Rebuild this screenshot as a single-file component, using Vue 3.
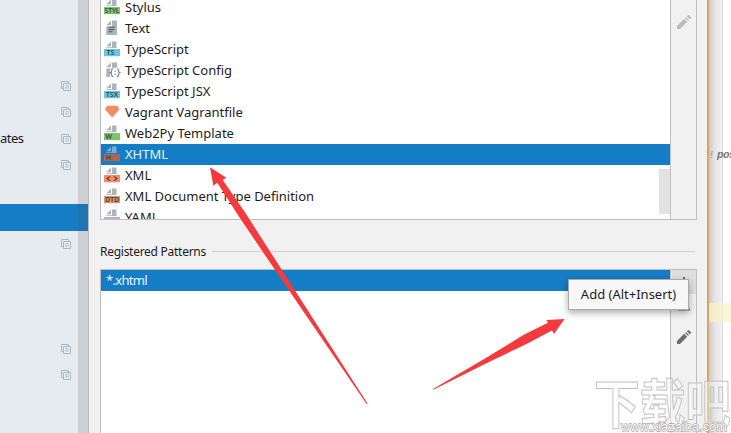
<script setup>
const sideRows = [
  { copy: true },
  { copy: true },
  { copy: true, label: 'ates' },
  { copy: true },
  {},
  { selected: true },
  { copy: true },
  {},
  {},
  {},
  { copy: true },
  { copy: true },
]

const fileTypes = [
  { name: 'Stylus', kind: 'tag', tag: 'STYL', tone: 'green' },
  { name: 'Text', kind: 'text' },
  { name: 'TypeScript', kind: 'tag', tag: 'TS', tone: 'cyan' },
  { name: 'TypeScript Config', kind: 'config' },
  { name: 'TypeScript JSX', kind: 'tag', tag: 'TSX', tone: 'cyan' },
  { name: 'Vagrant Vagrantfile', kind: 'vagrant' },
  { name: 'Web2Py Template', kind: 'tag', tag: 'W', tone: 'green' },
  { name: 'XHTML', kind: 'tag', tag: 'H', tone: 'brown', selected: true },
  { name: 'XML', kind: 'tag', tag: '<>', tone: 'orange' },
  { name: 'XML Document Type Definition', kind: 'tag', tag: 'DTD', tone: 'orange' },
  { name: 'YAML', kind: 'tag', tag: '', tone: 'violet' },
]
</script>

<template>
  <div class="screen">
    <aside class="sidebar">
      <div class="side-rows">
        <div v-for="(row, i) in sideRows" :key="i" class="side-row" :class="{ selected: row.selected }">
          <span class="side-label">{{ row.label }}</span>
          <svg v-if="row.copy" class="copy" viewBox="0 0 10 10">
            <path d="M2.500 7.500H.5V.5h7v2" />
            <path d="M2.500 2.500h7v7h-7zM4.300 4.800h3.500M4.300 6.900h3.500" />
          </svg>
        </div>
      </div>
      <div class="side-shade"></div>
    </aside>

    <main class="dialog">
      <section class="box types">
        <div class="list">
          <div v-for="item in fileTypes" :key="item.name" class="row" :class="{ selected: item.selected }">
            <svg class="icon" viewBox="0 0 16 16">
              <template v-if="item.kind === 'tag'">
                <path class="sheet" d="M2.300 5.300 7 .6v4.700zM8 .5h4.500V7H2.300V6.200H8z" />
                <rect class="tag" :class="item.tone" x="0" y="8" width="16" height="7.200" />
                <path v-if="item.tag === '<>'" class="angle" d="M6 9.500 3 11.600 6 13.700M10 9.500l3 2.100-3 2.100" />
                <text v-else class="tag-text" :class="{ wide: item.tag.length > 3 }" :x="item.tag.length > 2 ? 8 : item.tag.length > 1 ? 6.5 : 4.5" y="14.200">{{ item.tag }}</text>
              </template>
              <template v-else-if="item.kind === 'text'">
                <path class="sheet" d="M2.300 5.300 7 .6v4.700zM8 .5h5V15H2.300V6.400H8z" />
                <path class="lines" d="M4.500 7.300h6M4.500 9.500h6M4.500 11.700h4" />
              </template>
              <template v-else-if="item.kind === 'config'">
                <path class="sheet" d="M2.300 5.300 7 .6v4.700zM8 .5h5v5.200H8.300L6 8v7H2.300V6.400H8z" />
                <path class="brace" d="M9.200 6.700c-1.300 0-1.500.5-1.500 1.600 0 1.300-.2 2-1.200 2.300 1 .3 1.200 1 1.200 2.300 0 1.200.3 1.700 1.500 1.700M13 6.700c1.300 0 1.500.5 1.500 1.600 0 1.300.2 2 1.100 2.300-.9.3-1.100 1-1.100 2.300 0 1.200-.3 1.700-1.500 1.700" />
                <path class="brace" d="M11.100 8.800v1.200M11.100 11.500v1.400" />
              </template>
              <path v-else class="vagrant" d="M3 1.800h10.500l1.800 3.800-7 8-7.300-8z" />
            </svg>
            <span>{{ item.name }}</span>
          </div>
          <div class="thumb"></div>
        </div>
        <div class="tools">
          <svg class="pencil muted" viewBox="0 0 14 14">
            <path d="M0 11v3h3l7.200-7.200-3-3zM8.100 2.900l3 3 .8-.8-3-3zM9.800 1.300l3 3 .9-.9a1.100 1.100 0 0 0 0-1.500L12.200.4a1.100 1.100 0 0 0-1.500 0z" />
          </svg>
        </div>
      </section>

      <div class="heading">
        <span>Registered Patterns</span>
        <i></i>
      </div>

      <section class="box patterns">
        <div class="list">
          <div class="row selected pattern">*.xhtml</div>
        </div>
        <div class="tools stacked">
          <div class="button hover">
            <svg viewBox="0 0 12 12"><path d="M6 1v11M1 6.500h10" /></svg>
          </div>
          <div class="button">
            <svg viewBox="0 0 12 12"><path d="M0 9.500h12" /></svg>
          </div>
          <svg class="pencil" viewBox="0 0 14 14">
            <path d="M0 11v3h3l7.200-7.200-3-3zM8.100 2.900l3 3 .8-.8-3-3zM9.800 1.300l3 3 .9-.9a1.100 1.100 0 0 0 0-1.500L12.200.4a1.100 1.100 0 0 0-1.500 0z" />
          </svg>
        </div>
      </section>
    </main>

    <aside class="editor">
      <div class="gutter"></div>
      <div class="code">
        <div class="caret-line"></div>
      </div>
      <span class="snippet"><b>!</b>pos</span>
    </aside>

    <div class="tooltip">Add (Alt+Insert)</div>

    <svg class="overlay" viewBox="0 0 731 433">
      <g class="arrows">
        <path d="M210 167.300 226.300 177.700 222.700 180 245.100 212.600 288.300 279.900 367.500 403.500 366.500 404 283.800 282.800 238.900 216.600 217.300 182.700 213.300 185.700z" />
        <path d="M564.500 319 554 334 552 330.500 526.500 344 490 361.500 433.300 389.800 433 389 486.700 357.500 523.300 335 548 322.700 546.300 320z" />
      </g>
      <text class="mark" x="594" y="424" textLength="137" lengthAdjust="spacingAndGlyphs">下载吧</text>
      <text class="mark-url" x="621" y="431" textLength="106" lengthAdjust="spacingAndGlyphs">www.xiazaiba.com</text>
    </svg>
  </div>
</template>

<style>
body {
  margin: 0;
  overflow: hidden;
}
</style>

<style scoped>
.screen {
  position: relative;
  display: flex;
  width: 731px;
  height: 433px;
  overflow: hidden;
  background: #fff;
  color: #1c1c1c;
  font: 13px/21px "Noto Sans", sans-serif;
}
.sidebar {
  position: relative;
  flex: 0 0 88px;
  background: #e6ebf0;
}
.side-rows {
  padding-top: 73px;
}
.side-row {
  display: flex;
  align-items: center;
  justify-content: space-between;
  height: 26.25px;
  padding-right: 17px;
}
.side-row.selected {
  background: #147dc6;
}
.side-label {
  letter-spacing: -0.5px;
}
.copy {
  width: 10px;
  height: 10px;
  fill: none;
  stroke: #aeb7bf;
}
.side-shade {
  position: absolute;
  top: 0;
  right: 0;
  width: 10px;
  height: 100%;
  background: rgba(75, 75, 80, 0.17);
}
.dialog {
  flex: 0 0 619px;
  box-sizing: border-box;
  display: flex;
  flex-direction: column;
  padding: 0 11px;
  background: #f1f1f1;
  border-left: 1px solid #b9bbbe;
}
.box {
  display: flex;
  box-sizing: border-box;
  width: 597px;
  border: 1px solid #bebebe;
}
.types {
  height: 220px;
  border-top: 0;
}
.list {
  position: relative;
  flex: 1;
  overflow: hidden;
  background: #fff;
}
.types .row:first-child {
  margin-top: -3.500px;
}
.row {
  display: flex;
  align-items: center;
  height: 21px;
  padding-left: 3px;
  gap: 5px;
  white-space: nowrap;
}
.row.selected {
  background: #147dc6;
  color: #e8f4fc;
}
.icon {
  width: 16px;
  height: 16px;
  overflow: visible;
}
.sheet {
  fill: #abb4bb;
}
.selected .sheet {
  fill: #7ea9c8;
}
.green { fill: #80c46c; }
.cyan { fill: #6cc4e2; }
.brown { fill: #aa6753; }
.orange { fill: #f28c65; }
.violet { fill: #b8aed5; }
.tag-text {
  fill: #2b4a4c;
  font: 600 7px "Noto Sans", sans-serif;
  text-anchor: middle;
}
.tag-text.wide {
  font-size: 6.600px;
}
.angle,
.lines,
.brace {
  fill: none;
  stroke: #4b5359;
  stroke-width: 1.1;
}
.angle {
  stroke: #6b3527;
}
.brace {
  stroke: #747b80;
}
.vagrant {
  fill: #f48b65;
}
.thumb {
  position: absolute;
  top: 169px;
  right: 0;
  width: 11px;
  height: 45px;
  background: #e2e2e2;
}
.tools {
  flex: 0 0 25px;
  display: flex;
  flex-direction: column;
  align-items: center;
  border-left: 1px solid #bebebe;
  padding-top: 15px;
}
.pencil {
  width: 14px;
  height: 14px;
  fill: #6c6c6c;
}
.pencil.muted {
  fill: #bcbcbc;
}
.heading {
  display: flex;
  align-items: center;
  gap: 6px;
  height: 49px;
  box-sizing: border-box;
  font-size: 12px;
  letter-spacing: -0.27px;
}
.heading span {
  padding-top: 14px;
}
.heading i {
  flex: 1;
  height: 1px;
  margin: 14px 2px 0 0;
  background: #d3d3d3;
}
.patterns {
  flex: 1;
  border-bottom: 0;
}
.pattern {
  padding-left: 5px;
  letter-spacing: -0.7px;
}
.stacked {
  padding-top: 0;
}
.button {
  display: flex;
  align-items: center;
  justify-content: center;
  width: 24px;
  height: 24px;
}
.button.hover {
  background: #dedede;
}
.button svg {
  width: 12px;
  height: 12px;
  fill: none;
  stroke: #6c6c6c;
  stroke-width: 2;
}
.stacked .pencil {
  margin-top: 12px;
}
.editor {
  position: relative;
  flex: 1;
  display: flex;
  box-sizing: border-box;
  min-width: 0;
  margin-left: -1px;
  border-left: 2px solid #d6a65f;
}
.gutter {
  flex: 0 0 13px;
  background: linear-gradient(90deg, #cbc9cb, #e6e4e6 45%, #f2f2f2);
  border-right: 1px solid #dcdcdc;
}
.code {
  flex: 1;
  padding-top: 303px;
}
.caret-line {
  position: relative;
  height: 19px;
  margin-left: -14px;
  background: rgba(250, 243, 200, 0.75);
}
.snippet {
  position: absolute;
  top: 145px;
  left: -1px;
  color: #777;
  font: italic 600 11px/20px "Liberation Mono", monospace;
  letter-spacing: -0.6px;
  white-space: nowrap;
}
.snippet b {
  display: inline-block;
  width: 9px;
  color: #999;
  font-weight: 400;
}
.tooltip {
  position: absolute;
  top: 279px;
  left: 568px;
  box-sizing: border-box;
  width: 121px;
  height: 31px;
  background: #f7f7f7;
  border: 1px solid #aaa;
  box-shadow: 0 3px 7px rgba(0, 0, 0, 0.32);
  line-height: 29px;
  text-align: center;
  white-space: nowrap;
}
.overlay {
  position: absolute;
  inset: 0;
  width: 731px;
  height: 433px;
}
.arrows {
  fill: #f43a3c;
}
.mark {
  fill: rgba(250, 250, 250, 0.4);
  stroke: #c0c0c0;
  stroke-width: 1;
  font: 700 53px "Noto Sans CJK SC", sans-serif;
}
.mark-url {
  fill: #f4f4f4;
  stroke: #b0b0b0;
  stroke-width: 1.3;
  paint-order: stroke;
  font: 400 13.500px "Liberation Sans", sans-serif;
}
</style>
